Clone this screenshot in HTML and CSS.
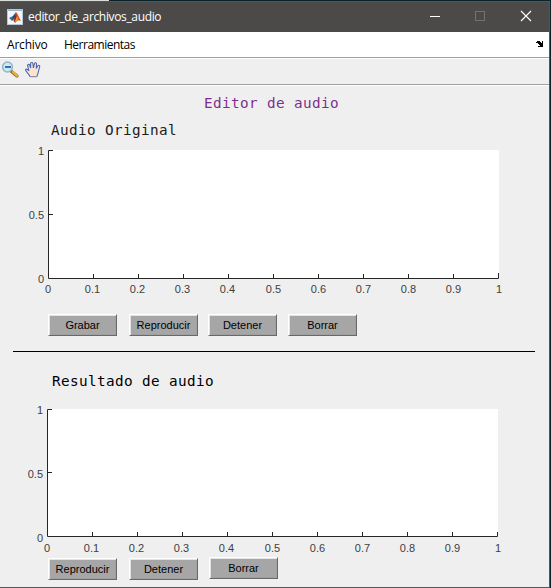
FILE: index.html
```html
<!DOCTYPE html>
<html lang="es">
<head>
<meta charset="utf-8">
<title>editor_de_archivos_audio</title>
<link rel="stylesheet" href="styles.css">
</head>
<body>
<div class="strip"></div>
<div class="window">
  <header class="titlebar">
    <svg class="logo" width="16" height="16" viewBox="0 0 16 16">
      <rect x=".5" y=".5" width="15" height="15" fill="#f4f6f7" stroke="#b4c8d5"/>
      <path d="M1 1.5h14" stroke="#9bb6c8"/>
      <path d="M2 9l4-2 2 2-3 3z" fill="#3a75a5"/>
      <path d="M6 7l3-4-1 6-3 2z" fill="#244a78"/>
      <path d="M9 3c2 2 3 6 5 9-2-1-3-1-4 0l-2 2-2-3c2-1 2-5 3-8z" fill="#d9541e"/>
      <path d="M9 4l1 6-2 3-1-2c1-2 1-4 2-7z" fill="#8e2419"/>
      <path d="M10 7l1 3-2 3-1-1z" fill="#f5a13a"/>
    </svg>
    <span class="title">editor_de_archivos_audio</span>
    <svg class="controls" width="108" height="12" viewBox="0 0 108 12" fill="none">
      <path d="M0 6.5h10" stroke="#fff"/>
      <rect x="45.5" y="1.5" width="9" height="9" stroke="#747270"/>
      <path d="M91 1l10 10M101 1L91 11" stroke="#fff" stroke-width="1.2"/>
    </svg>
  </header>
  <nav class="menu">
    <span class="archivo">Archivo</span><span class="herr">Herramientas</span>
    <svg class="dock" width="8" height="7" viewBox="0 0 8 7" shape-rendering="crispEdges">
      <path d="M0 1h1V0h3v1h1v1h1V0h1v6H2V5h2V4H3V3H2V2H0z"/>
    </svg>
  </nav>
  <div class="toolbar">
    <svg width="18" height="18" viewBox="0 0 18 18">
      <path d="M10 10l6 5" stroke="#8b6a34" stroke-width="3.2" stroke-linecap="round"/>
      <path d="M12 11l4 3.7" stroke="#efb03a" stroke-width="2.3" stroke-linecap="round"/>
      <circle cx="6.500" cy="6" r="4.900" fill="#c5edf5" stroke="#94b3cd" stroke-width="1.500"/>
      <path d="M4 6h6" stroke="#22479a" stroke-width="1.600"/>
    </svg>
    <svg width="18" height="18" viewBox="0 0 18 18">
      <path d="M6 15.500C5 13 2 10.500 1.500 9c.3-1.500 2-1 3.500.8L3.500 4.500c.2-1.500 1.800-1.500 2.300 0L6.700 7 6.600 2.500c.3-1.400 2-1.400 2.300 0L9.400 7l1-4.400c.6-1.300 2.100-.9 2.100.5L12.200 7.500l1.600-2.700c.9-1 2.300-.2 1.900 1L14.500 10c-.1 2-.9 3.300-1.700 5.500z" fill="#fde4cf" stroke="#4668b5" stroke-width="1.050"/>
      <path d="M6 16h7" stroke="#e4b899"/>
    </svg>
  </div>
  <main>
    <h1>Editor de audio</h1>
    <h2>Audio Original</h2>
    <svg class="plot first" width="549" height="152" viewBox="0 144 549 152">
      <rect x="48" y="150" width="451" height="129" fill="#fff"/>
      <path class="axis" d="M53 150.500H48.500V278.500H498.500V273M48 214.500h5M93.500 278v-4M138.500 278v-4M183.500 278v-4M228.500 278v-4M273.500 278v-4M318.500 278v-4M363.500 278v-4M408.500 278v-4M453.500 278v-4"/>
      <g class="ylab"><text x="44" y="155">1</text><text x="44" y="219">0.5</text><text x="44" y="283">0</text></g>
      <g class="xlab"><text x="48" y="293">0</text><text x="92.500" y="293">0.1</text><text x="137.500" y="293">0.2</text><text x="182.500" y="293">0.3</text><text x="227.500" y="293">0.4</text><text x="273.500" y="293">0.5</text><text x="318.500" y="293">0.6</text><text x="363.500" y="293">0.7</text><text x="408.500" y="293">0.8</text><text x="453.500" y="293">0.9</text><text x="499" y="293">1</text></g>
    </svg>
    <div class="buttons"><button>Grabar</button><button>Reproducir</button><button>Detener</button><button class="last">Borrar</button></div>
    <hr>
    <h2 class="result">Resultado de audio</h2>
    <svg class="plot second" width="549" height="152" viewBox="0 403 549 152">
      <rect x="47" y="409" width="451" height="128" fill="#fff"/>
      <path class="axis" d="M52 409.500H47.500V536.500H497.500V532M47 472.500h5M92.500 536v-4M137.500 536v-4M182.500 536v-4M227.500 536v-4M272.500 536v-4M317.500 536v-4M362.500 536v-4M407.500 536v-4M452.500 536v-4"/>
      <g class="ylab"><text x="43" y="414">1</text><text x="43" y="478">0.5</text><text x="43" y="542">0</text></g>
      <g class="xlab"><text x="47" y="552">0</text><text x="91.500" y="552">0.1</text><text x="136.500" y="552">0.2</text><text x="181.500" y="552">0.3</text><text x="226.500" y="552">0.4</text><text x="272.500" y="552">0.5</text><text x="317.500" y="552">0.6</text><text x="362.500" y="552">0.7</text><text x="407.500" y="552">0.8</text><text x="452.500" y="552">0.9</text><text x="498" y="552">1</text></g>
    </svg>
    <div class="buttons lower"><button>Reproducir</button><button>Detener</button><button class="raised">Borrar</button></div>
  </main>
</div>
</body>
</html>
```
FILE: styles.css
```css
* { box-sizing: border-box; }
body { margin: 0; width: 551px; height: 588px; overflow: hidden; background: #09232b; font-family: "Liberation Sans", Arial, sans-serif; }
.strip { width: 109px; height: 1px; background: #d8dcd8; }
.window { width: 550px; height: 587px; display: flex; flex-direction: column; background: #efefef; border: solid #565656; border-width: 1px 1px 1px 0; }
.titlebar { height: 30px; flex: none; background: #4c4a48; color: #fff; display: flex; align-items: center; padding-left: 7px; }
.logo { margin-top: -1px; }
.title { margin-left: 5px; width: 396px; font: 12px/16px "Open Sans", sans-serif; letter-spacing: -.35px; white-space: nowrap; }
.controls { margin: -2px 0 0 6px; flex: none; }
.menu { height: 26px; flex: none; background: #fff; border-bottom: 1px solid #a0a0a0; display: flex; align-items: center; padding: 0 5px 0 7px; font: 12px/18px "Open Sans", sans-serif; color: #000; }
.archivo { width: 57px; letter-spacing: -.2px; }
.herr { letter-spacing: -.5px; }
.dock { margin-left: auto; }
.toolbar { height: 27px; flex: none; border-top: 1px solid #fff; border-bottom: 1px solid #a0a0a0; box-shadow: 0 1px #fff; padding: 2px 0 0 1px; display: flex; gap: 5px; }
main { display: flex; flex-direction: column; }
h1, h2 { margin: 0; font: 14.3px/18px "DejaVu Sans Mono", monospace; letter-spacing: .39px; white-space: pre; }
h1 { color: #7e2f8e; margin: 9px 0 0 204px; }
h2 { color: #202020; margin: 9px 0 0 51px; }
h2.result { color: #000; margin: 20px 0 0 52px; }
.plot { display: block; font-size: 11px; fill: #404040; }
.first { margin-top: 5px; }
.second { margin-top: 13px; }
.axis { fill: none; stroke: #262626; }
.ylab { text-anchor: end; }
.xlab { text-anchor: middle; }
.buttons { display: flex; gap: 12px; margin: 18px 0 0 48px; }
.buttons button { width: 69px; height: 22px; padding: 0; border: 1px solid; border-color: #fff #696969 #696969 #fff; box-shadow: inset 1px 1px #e3e3e3, inset -1px -1px #a0a0a0; background: #a6a6a6; color: #000; font: 11px/18px "Liberation Sans", sans-serif; }
.buttons button:nth-child(3) { margin-left: -2px; }
.buttons .last { margin-left: -1px; }
hr { width: 522px; height: 1px; margin: 15px 0 0 13px; border: 0; background: #000; }
.lower { margin-top: 3px; }
.lower button.raised { margin: -1px 0 0 -1px; }
```
